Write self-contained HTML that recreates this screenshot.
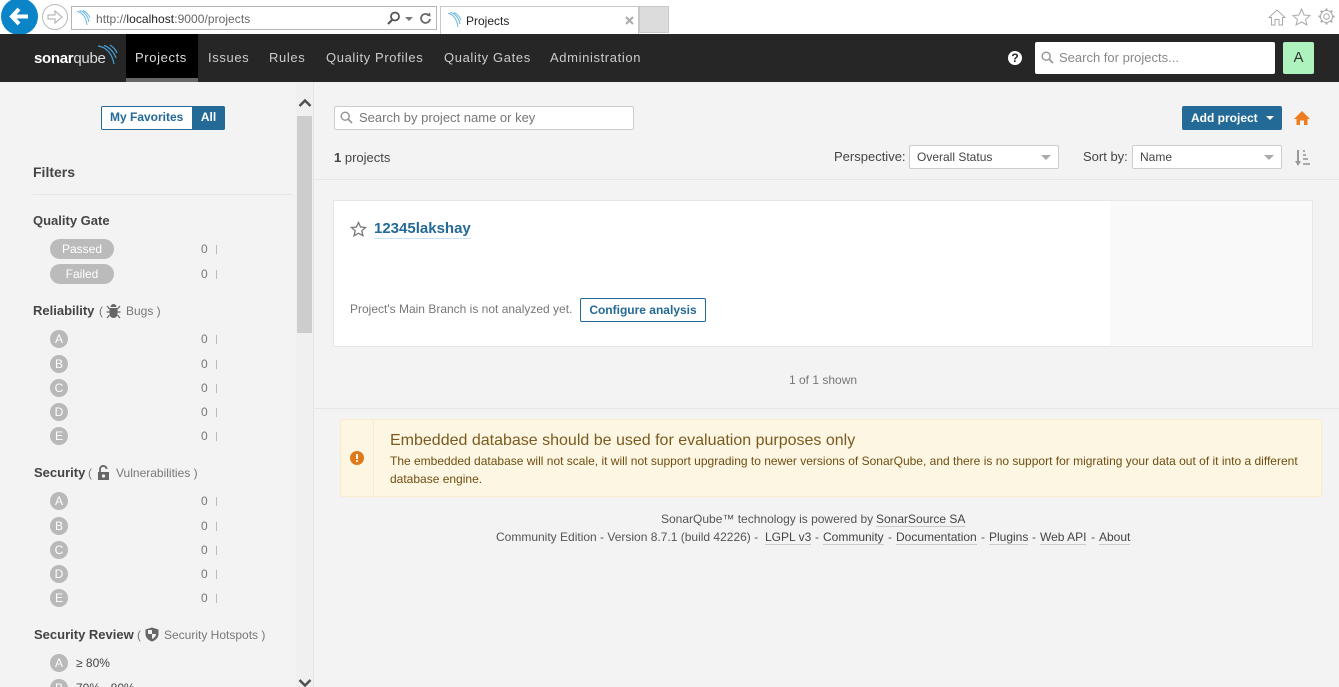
<!DOCTYPE html>
<html><head><meta charset="utf-8"><title>Projects</title>
<style>
html,body{margin:0;padding:0;width:1339px;height:687px;overflow:hidden;background:#f3f3f3;font-family:"Liberation Sans",sans-serif;font-size:12px;color:#444}
#w{position:relative;width:1339px;height:687px;overflow:hidden}
div,a,svg{position:absolute;white-space:nowrap;box-sizing:border-box}
#w{position:relative}
.t{line-height:16px}
.nav{top:50px;font-size:13px;color:#ccc;letter-spacing:.62px}
.pill{left:50px;width:64px;height:20px;border-radius:10px;background:#bbb;color:#fff;text-align:center;line-height:20px;font-size:12px}
.r{left:50px;width:18px;height:18px;border-radius:9px;background:#b9b9b9;color:#fff;text-align:center;line-height:18px;font-size:12px}
.n{left:201px;color:#777;line-height:16px;font-size:12px}
.b{left:216px;width:1px;height:9px;background:#bbb}
.h{font-size:13px;font-weight:bold;color:#444;line-height:16px;left:33px}
.sub{font-size:12px;color:#777;line-height:16px}
.u{border-bottom:1px solid #ccc;line-height:14px;color:#444}
.sel{height:24px;background:#fff;border:1px solid #ccc;border-radius:2px;line-height:22px;padding-left:7px;color:#444;top:145px}
.car{width:0;height:0;border-left:5px solid transparent;border-right:5px solid transparent;border-top:5px solid #aaa}
</style></head><body><div id="w">
<!-- Browser chrome -->
<div style="left:0;top:0;width:1339px;height:34px;background:#fff"></div>
<div style="left:1px;top:-2px;width:37px;height:37px;border-radius:50%;background:#0b85c8"></div>
<svg style="left:8px;top:6px" width="24" height="22" viewBox="0 0 24 22"><path d="M11 3 L4 10.500 L11 18 M4.500 10.500 H20" fill="none" stroke="#fff" stroke-width="4"/></svg>
<div style="left:42px;top:4px;width:26px;height:26px;border-radius:50%;border:1px solid #bbb;background:#fff"></div>
<svg style="left:46px;top:8px" width="18" height="18" viewBox="0 0 18 18"><path d="M2 7 H9 V3 L16 9 L9 15 V11 H2 Z" fill="none" stroke="#aaa" stroke-width="1"/></svg>
<div style="left:71px;top:6px;width:366px;height:24px;border:1px solid #b5b5b5;background:#fff"></div>
<svg style="left:76px;top:10px" width="15" height="17" viewBox="0 0 15 17"><path d="M1 1.500 C6 2 10 7 11 15 M3.500 .5 C8 1.500 12 6 13 12 M7 .5 C10 2 13 5 14 8" fill="none" stroke="#69b5e0" stroke-width="1"/></svg>
<div class="t" style="left:96px;top:11px;font-size:12px;color:#666;letter-spacing:.05px">http://<span style="color:#222">localhost</span>:9000/projects</div>
<svg style="left:386px;top:11px" width="16" height="15" viewBox="0 0 16 15"><circle cx="9" cy="5.500" r="4" fill="none" stroke="#555" stroke-width="1.800"/><path d="M6 9 L2 13" stroke="#555" stroke-width="2.200"/></svg>
<div style="left:405px;top:17px;width:0;height:0;border-left:4px solid transparent;border-right:4px solid transparent;border-top:4px solid #777"></div>
<svg style="left:419px;top:11px" width="13" height="15" viewBox="0 0 13 15"><path d="M9.500 4 A4.500 4.500 0 1 0 11 8" fill="none" stroke="#666" stroke-width="1.700"/><path d="M7.500 4.500 L11.500 5.500 L11 1.500 Z" fill="#666"/></svg>
<div style="left:440px;top:6px;width:199px;height:28px;background:#fff;border:1px solid #c8c8c8;border-bottom:0"></div>
<svg style="left:447px;top:12px" width="15" height="17" viewBox="0 0 15 17"><path d="M1 1.500 C6 2 10 7 11 15 M3.500 .5 C8 1.500 12 6 13 12 M7 .5 C10 2 13 5 14 8" fill="none" stroke="#69b5e0" stroke-width="1"/></svg>
<div class="t" style="left:466px;top:13px;font-size:12px;color:#222">Projects</div>
<svg style="left:625px;top:16px" width="9" height="9" viewBox="0 0 9 9"><path d="M1 1 L8 8 M8 1 L1 8" stroke="#aaa" stroke-width="2"/></svg>
<div style="left:639px;top:6px;width:30px;height:27px;background:#dcdcdc;border:1px solid #c8c8c8"></div>
<svg style="left:1268px;top:9px" width="18" height="17" viewBox="0 0 18 17"><path d="M1 8.500 L9 1 L17 8.500 H14.500 V16 H11 V10.500 H7 V16 H3.500 V8.500 Z" fill="none" stroke="#aaa"/></svg>
<svg style="left:1292px;top:8px" width="19" height="18" viewBox="0 0 19 18"><path d="M9.500 1 L12 7 L18 7.500 L13.500 11.500 L15 17 L9.500 14 L4 17 L5.500 11.500 L1 7.500 L7 7 Z" fill="none" stroke="#aaa"/></svg>
<svg style="left:1318px;top:8px" width="17" height="17" viewBox="0 0 17 17"><circle cx="8.500" cy="8.500" r="2.800" fill="none" stroke="#aaa"/><circle cx="8.500" cy="8.500" r="6" fill="none" stroke="#aaa"/><path d="M8.500 .5 V2.500 M8.500 14.500 V16.500 M.5 8.500 H2.500 M14.500 8.500 H16.500 M2.800 2.800 L4.300 4.300 M12.700 12.700 L14.200 14.200 M14.200 2.800 L12.700 4.300 M4.300 12.700 L2.800 14.200" stroke="#aaa" stroke-width="2"/></svg>

<!-- Top nav -->
<div style="left:0;top:34px;width:1339px;height:48px;background:#262626"></div>
<div style="left:126px;top:34px;width:72px;height:48px;background:#000;border-bottom:4px solid #666"></div>
<div class="t" style="left:34px;top:50px;font-size:15px;color:#fff;letter-spacing:-.3px;line-height:18px"><b>sonar</b><span style="font-weight:normal;color:#ddd">qube</span></div>
<svg style="left:97px;top:44px" width="21" height="21" viewBox="0 0 21 21"><path d="M1 2 C9 3 15 9 17 20 M7 1.500 C12 3 17 8 19 14 M13 1 C16 3 19 6 20 9" fill="none" stroke="#4b9fd5" stroke-width="1.200"/></svg>
<div class="t nav" style="left:135px;color:#ddd">Projects</div>
<div class="t nav" style="left:208px">Issues</div>
<div class="t nav" style="left:269px">Rules</div>
<div class="t nav" style="left:326px">Quality Profiles</div>
<div class="t nav" style="left:444px">Quality Gates</div>
<div class="t nav" style="left:550px">Administration</div>
<div style="left:1008px;top:51px;width:14px;height:14px;border-radius:50%;background:#fff;color:#262626;font-weight:bold;font-size:12px;line-height:14px;text-align:center">?</div>
<div style="left:1035px;top:42px;width:240px;height:32px;background:#fff;border-radius:2px"></div>
<svg style="left:1041px;top:51px" width="13" height="13" viewBox="0 0 13 13"><circle cx="5.200" cy="5.200" r="4" fill="none" stroke="#999" stroke-width="1.500"/><path d="M8 8 L12 12" stroke="#999" stroke-width="1.800"/></svg>
<div class="t" style="left:1059px;top:50px;color:#888;font-size:13px">Search for projects...</div>
<div style="left:1283px;top:42px;width:31px;height:32px;background:#aef2bd;border-radius:2px;color:#333;font-size:15px;text-align:center;line-height:32px">A</div>

<!-- Sidebar -->
<div style="left:0;top:82px;width:314px;height:605px;background:#f3f3f3;border-right:1px solid #e6e6e6"></div>
<div style="left:296px;top:82px;width:17px;height:605px;background:#f0f0f0"></div>
<div style="left:297px;top:116px;width:15px;height:217px;background:#cdcdcd"></div>
<svg style="left:298px;top:98px" width="14" height="10" viewBox="0 0 14 10"><path d="M1.500 8 L7 2.500 L12.500 8" fill="none" stroke="#505050" stroke-width="2.500"/></svg>
<div style="left:101px;top:106px;width:124px;height:24px;border:1px solid #236a97;border-radius:2px;background:#fff"></div>
<div style="left:192px;top:106px;width:33px;height:24px;background:#236a97;border-radius:0 2px 2px 0;color:#fff;font-weight:bold;text-align:center;line-height:23px;font-size:12px">All</div>
<div style="left:110px;top:106px;color:#236a97;font-weight:bold;line-height:23px;font-size:12px">My Favorites</div>
<div class="t" style="left:33px;top:164px;font-size:14px;font-weight:bold;color:#444">Filters</div>
<div style="left:33px;top:194px;width:260px;height:1px;background:#e6e6e6"></div>
<div class="h" style="top:213px">Quality Gate</div>
<div class="pill" style="top:239px">Passed</div><div class="n" style="top:241px">0</div><div class="b" style="top:245px"></div>
<div class="pill" style="top:264px">Failed</div><div class="n" style="top:266px">0</div><div class="b" style="top:270px"></div>

<div class="h" style="top:303px">Reliability</div><div class="sub" style="left:99px;top:303px">(</div>
<svg style="left:106px;top:303px" width="15" height="16" viewBox="0 0 15 16"><path d="M4.500 4 A3 3 0 0 1 10.500 4 Z M3.500 5 H11.500 V11 A4 4 0 0 1 3.500 11 Z" fill="#666"/><path d="M1 3 L3.500 6 M14 3 L11.500 6 M.5 9 H3.500 M14.500 9 H11.500 M1 15 L3.500 12 M14 15 L11.500 12" stroke="#666" stroke-width="1.200"/></svg>
<div class="sub" style="left:126px;top:303px">Bugs )</div>
<div class="r" style="top:330px">A</div><div class="n" style="top:331px">0</div><div class="b" style="top:335px"></div>
<div class="r" style="top:355px">B</div><div class="n" style="top:356px">0</div><div class="b" style="top:360px"></div>
<div class="r" style="top:379px">C</div><div class="n" style="top:380px">0</div><div class="b" style="top:384px"></div>
<div class="r" style="top:403px">D</div><div class="n" style="top:404px">0</div><div class="b" style="top:408px"></div>
<div class="r" style="top:427px">E</div><div class="n" style="top:428px">0</div><div class="b" style="top:432px"></div>

<div class="h" style="top:465px;left:34px">Security</div><div class="sub" style="left:88px;top:465px">(</div>
<svg style="left:97px;top:465px" width="13" height="16" viewBox="0 0 13 16"><path d="M3 7 V4.500 A3.300 3.300 0 0 1 9.600 4" fill="none" stroke="#666" stroke-width="1.800"/><path d="M1 7 H12 V15 H1 Z" fill="#666"/><circle cx="6.500" cy="11" r="1.600" fill="#f3f3f3"/></svg>
<div class="sub" style="left:116px;top:465px">Vulnerabilities )</div>
<div class="r" style="top:492px">A</div><div class="n" style="top:493px">0</div><div class="b" style="top:497px"></div>
<div class="r" style="top:517px">B</div><div class="n" style="top:518px">0</div><div class="b" style="top:522px"></div>
<div class="r" style="top:541px">C</div><div class="n" style="top:542px">0</div><div class="b" style="top:546px"></div>
<div class="r" style="top:565px">D</div><div class="n" style="top:566px">0</div><div class="b" style="top:570px"></div>
<div class="r" style="top:589px">E</div><div class="n" style="top:590px">0</div><div class="b" style="top:594px"></div>

<div class="h" style="top:627px;left:34px">Security Review</div><div class="sub" style="left:137px;top:627px">(</div>
<svg style="left:145px;top:627px" width="14" height="15" viewBox="0 0 14 15"><path d="M7 .5 L13.500 2.500 V7 C13.500 11 10 13.500 7 14.500 C4 13.500 .5 11 .5 7 V2.500 Z" fill="#666"/><path d="M7 3 V7 H3 V3 Z M7 7 H11 C11 9.500 9 11 7 12 Z" fill="#f3f3f3"/></svg>
<div class="sub" style="left:164px;top:627px">Security Hotspots )</div>
<div class="r" style="top:654px">A</div><div class="t" style="left:76px;top:655px;color:#444">≥ 80%</div>
<div class="r" style="top:679px">B</div><div class="t" style="left:76px;top:680px;color:#444">70% - 80%</div>
<div style="left:296px;top:678px;width:17px;height:9px;background:#f0f0f0"></div>
<svg style="left:298px;top:679px" width="14" height="8" viewBox="0 0 14 8"><path d="M1.500 1 L7 6.500 L12.500 1" fill="none" stroke="#505050" stroke-width="2.500"/></svg>

<!-- Main header -->
<div style="left:314px;top:82px;width:1025px;height:605px;background:#f3f3f3"></div>
<div style="left:334px;top:106px;width:300px;height:24px;background:#fff;border:1px solid #ccc;border-radius:2px"></div>
<svg style="left:340px;top:111px" width="13" height="13" viewBox="0 0 13 13"><circle cx="5.200" cy="5.200" r="4" fill="none" stroke="#999" stroke-width="1.500"/><path d="M8 8 L12 12" stroke="#999" stroke-width="1.800"/></svg>
<div class="t" style="left:359px;top:110px;color:#777;font-size:13px">Search by project name or key</div>
<div class="t" style="left:334px;top:150px;font-size:13px;color:#444"><b>1</b> projects</div>
<div style="left:1182px;top:106px;width:100px;height:24px;background:#236a97;border-radius:2px"></div>
<div style="left:1191px;top:107px;line-height:23px;color:#fff;font-weight:bold;font-size:12px">Add project</div>
<div style="left:1266px;top:116px;width:0;height:0;border-left:4px solid transparent;border-right:4px solid transparent;border-top:4px solid #fff"></div>
<svg style="left:1294px;top:110px" width="16" height="16" viewBox="0 0 16 16"><path d="M8 1 L16 9 H13.500 V15 H10 V10.500 H6 V15 H2.500 V9 H0 Z" fill="#ed7d20"/></svg>
<div class="t" style="left:834px;top:149px;font-size:13px;color:#444">Perspective:</div>
<div class="sel" style="left:909px;width:150px">Overall Status</div>
<div class="car" style="left:1041px;top:155px"></div>
<div class="t" style="left:1083px;top:149px;font-size:13px;color:#444">Sort by:</div>
<div class="sel" style="left:1132px;width:150px">Name</div>
<div class="car" style="left:1264px;top:155px"></div>
<svg style="left:1294px;top:149px" width="17" height="18" viewBox="0 0 17 18"><path d="M4 1 V15" stroke="#999" stroke-width="2"/><path d="M1 12 L4 17 L7 12 Z" fill="#999"/><path d="M9 2 H11 M9 6 H12 M9 10 H14 M9 15 H16" stroke="#aaa" stroke-width="2"/></svg>
<div style="left:314px;top:179px;width:1025px;height:1px;background:#e6e6e6"></div>

<!-- Card -->
<div style="left:333px;top:200px;width:980px;height:147px;background:#f9f9f9;border:1px solid #e6e6e6"></div>
<div style="left:334px;top:201px;width:776px;height:145px;background:#fff"></div>
<svg style="left:350px;top:221px" width="17" height="16" viewBox="0 0 17 16"><path d="M8.500 1.500 L10.600 6 L15.500 6.500 L11.800 9.800 L12.900 14.700 L8.500 12.200 L4.100 14.700 L5.200 9.800 L1.500 6.500 L6.400 6 Z" fill="none" stroke="#777" stroke-width="1.300"/></svg>
<div style="left:374px;top:220px;font-size:15px;font-weight:bold;color:#236a97;line-height:18px;border-bottom:1px solid #cae3f2;height:19px">12345lakshay</div>
<div class="t" style="left:350px;top:301px;color:#777;font-size:12px">Project's Main Branch is not analyzed yet.</div>
<div style="left:580px;top:298px;width:126px;height:24px;border:1px solid #236a97;border-radius:2px;background:#fff;color:#236a97;font-weight:bold;text-align:center;line-height:22px;font-size:12px">Configure analysis</div>
<div class="t" style="left:789px;top:372px;color:#777;font-size:12px">1 of 1 shown</div>
<div style="left:314px;top:408px;width:1025px;height:1px;background:#e6e6e6"></div>

<!-- Warning -->
<div style="left:340px;top:419px;width:982px;height:78px;background:#fdf6e3;border:1px solid #faebcc;border-radius:2px"></div>
<div style="left:373px;top:420px;width:1px;height:76px;background:#faebcc"></div>
<div style="left:350px;top:451px;width:14px;height:14px;border-radius:50%;background:#de7a1c"></div>
<div style="left:356px;top:454px;width:2px;height:5px;background:#fdf6e3"></div>
<div style="left:356px;top:460px;width:2px;height:2px;background:#fdf6e3"></div>
<div style="left:390px;top:431px;font-size:16px;line-height:19px;color:#7b5a1e">Embedded database should be used for evaluation purposes only</div>
<div class="t" style="left:390px;top:452px;font-size:12px;line-height:18px;color:#6f4e11">The embedded database will not scale, it will not support upgrading to newer versions of SonarQube, and there is no support for migrating your data out of it into a different</div>
<div class="t" style="left:390px;top:470px;font-size:12px;line-height:18px;color:#6f4e11">database engine.</div>

<!-- Footer -->
<div class="t" style="left:661px;top:511px;color:#555">SonarQube™ technology is powered by</div>
<div class="u" style="left:876px;top:512px">SonarSource SA</div>
<div class="t" style="left:496px;top:529px;color:#555">Community Edition - Version 8.7.1 (build 42226) -</div>
<div class="u" style="left:765px;top:530px">LGPL v3</div><div class="t" style="left:815px;top:529px;color:#555">-</div>
<div class="u" style="left:823px;top:530px">Community</div><div class="t" style="left:888px;top:529px;color:#555">-</div>
<div class="u" style="left:896px;top:530px">Documentation</div><div class="t" style="left:981px;top:529px;color:#555">-</div>
<div class="u" style="left:989px;top:530px">Plugins</div><div class="t" style="left:1032px;top:529px;color:#555">-</div>
<div class="u" style="left:1040px;top:530px">Web API</div><div class="t" style="left:1091px;top:529px;color:#555">-</div>
<div class="u" style="left:1099px;top:530px">About</div>
</div></body></html>
